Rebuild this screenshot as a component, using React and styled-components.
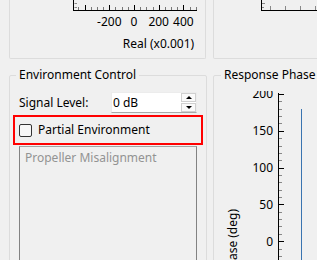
import React from "react";
import styled, { createGlobalStyle } from "styled-components";

const GlobalStyle = createGlobalStyle`
  html, body {
    margin: 0;
    padding: 0;
    background: #f0f0f0;
    overflow: hidden;
  }
  body {
    font-family: "Noto Sans", "Liberation Sans", sans-serif;
    font-size: 12px;
    color: #000;
  }
`;

const Page = styled.div`
  width: 420px;
  height: 260px;
  padding-left: 9px;
  box-sizing: border-box;
`;

const TopRow = styled.div`
  display: grid;
  grid-template-columns: 197px 1fr;
  column-gap: 7px;
`;

const OpenGroup = styled.div`
  height: 58px;
  border: 1px solid #dcdcdc;
  border-top: none;
  border-radius: 0 0 2px 2px;
  overflow: hidden;
`;

const BottomRow = styled.div`
  display: grid;
  grid-template-columns: 198px 1fr;
  column-gap: 6px;
  margin-top: 8px;
`;

const Group = styled.fieldset`
  margin: 0;
  padding: 0 ${(p) => p.$padX}px;
  min-width: 0;
  height: 240px;
  border: 1px solid #dcdcdc;
  border-radius: 2px;
`;

const GroupTitle = styled.legend`
  padding: 0 3px;
  margin-left: ${(p) => p.$shift || 0}px;
  font-size: 12px;
  line-height: 16px;
  white-space: nowrap;
`;

const FieldRow = styled.div`
  display: grid;
  grid-template-columns: 92px 86px;
  align-items: center;
  margin-top: 9px;
`;

const FieldLabel = styled.span`
  line-height: 16px;
`;

const SpinBox = styled.div`
  display: flex;
  align-items: center;
  height: 21px;
  box-sizing: border-box;
  background: #fff;
  border: 1px solid #ececec;
  border-bottom-color: #a9a9a9;
`;

const SpinValue = styled.span`
  flex: 1;
  padding-left: 1px;
  line-height: 16px;
`;

const SpinButtons = styled.div`
  display: flex;
  flex-direction: column;
  gap: 1px;
  margin-right: 0;
`;

const SpinButton = styled.div`
  width: 15px;
  height: 9px;
  box-sizing: border-box;
  border: 1px solid #d0d0d0;
  background: #fafafa;
  display: flex;
  align-items: center;
  justify-content: center;

  &::after {
    content: "";
    border-left: 3px solid transparent;
    border-right: 3px solid transparent;
    ${(p) =>
      p.$down
        ? "border-top: 3px solid #000;"
        : "border-bottom: 3px solid #000;"}
  }
`;

const CheckRow = styled.label`
  display: flex;
  align-items: center;
  gap: 6px;
  width: 190px;
  height: 30px;
  box-sizing: border-box;
  margin: 2px 0 0 -6px;
  padding-left: 4px;
  border: 2px solid #ff0000;
  line-height: 16px;
`;

const CheckBox = styled.span`
  width: 13px;
  height: 13px;
  box-sizing: border-box;
  border: 1px solid #333;
  border-radius: 2px;
  background: #f7f7f7;
`;

const ListBox = styled.div`
  width: 178px;
  height: 140px;
  box-sizing: border-box;
  margin-top: 1px;
  border: 1px solid #828282;
  border-top-color: #a3a3a3;
`;

const ListItem = styled.div`
  padding: 3px 5px;
  line-height: 16px;
  color: #939393;
`;

const PlotSvg = styled.svg`
  display: block;
  margin-top: ${(p) => p.$top || 0}px;
  font-family: "Noto Sans", "Liberation Sans", sans-serif;
  font-size: 12px;
`;

const realX = (v) => 134 + v * 0.1235;

const RealPlot = () => {
  const minors = [];
  for (let v = -450; v <= 500; v += 50) minors.push(v);
  return (
    <PlotSvg width="195" height="58">
      <g transform="translate(-10,0)">
        <line x1="74.5" y1="3.5" x2="77" y2="3.5" stroke="#888" />
        <line x1="74.5" y1="7.5" x2="77" y2="7.5" stroke="#888" />
        {minors.map((v) => {
          const major = v % 200 === 0;
          const x = Math.round(realX(v)) + 0.5;
          return (
            <line
              key={v}
              x1={x}
              x2={x}
              y1={major ? 5 : 7}
              y2={10}
              stroke={major ? "#000" : "#777"}
            />
          );
        })}
        <line x1="73.5" y1="0" x2="73.5" y2="11" stroke="#000" />
        <line x1="73" y1="10.5" x2="197" y2="10.5" stroke="#000" />
        {[-200, 0, 200, 400].map((v) => (
          <text key={v} x={realX(v)} y="25.5" textAnchor="middle">
            {v}
          </text>
        ))}
        <text x="158.5" y="47.5" textAnchor="middle">
          Real (x0.001)
        </text>
      </g>
    </PlotSvg>
  );
};

const CornerPlot = () => (
  <PlotSvg width="110" height="58">
    <g transform="translate(-214,0)">
      <line x1="262" y1="3.5" x2="265" y2="3.5" stroke="#888" />
      <line x1="262" y1="7.5" x2="264" y2="7.5" stroke="#888" />
      {[270.5, 285.5, 300.5, 315.5].map((x) => (
        <line key={x} x1={x} x2={x} y1="6" y2="10" stroke="#888" />
      ))}
      <line x1="261.5" y1="0" x2="261.5" y2="11" stroke="#000" />
      <line x1="261" y1="10.5" x2="330" y2="10.5" stroke="#000" />
    </g>
  </PlotSvg>
);

const phaseY = (v) => 241.2 - v * 0.736;

const PhasePlot = () => {
  const ticks = [];
  for (let v = -20; v <= 200; v += 10) ticks.push(v);
  return (
    <PlotSvg width="110" height="180" $top={8}>
      <g transform="translate(-221,-91)">
        {ticks.map((v) => {
          const major = v % 50 === 0;
          const y = Math.round(phaseY(v)) + 0.5;
          return (
            <line
              key={v}
              x1="278"
              x2={major ? 284 : 282}
              y1={y}
              y2={y}
              stroke={major ? "#000" : "#888"}
            />
          );
        })}
        <line x1="278.5" y1="93" x2="278.5" y2="270" stroke="#000" />
        {[0, 50, 100, 150, 200].map((v) => (
          <text key={v} x="273" y={phaseY(v) + 4.3} textAnchor="end">
            {v}
          </text>
        ))}
        <text
          transform="translate(237,209) rotate(-90)"
          textAnchor="end"
        >
          Response Phase (deg)
        </text>
        <line x1="301.5" y1="109" x2="301.5" y2="270" stroke="#3a74b0" />
      </g>
    </PlotSvg>
  );
};

export default function App() {
  return (
    <>
      <GlobalStyle />
      <Page>
        <TopRow>
          <OpenGroup>
            <RealPlot />
          </OpenGroup>
          <OpenGroup>
            <CornerPlot />
          </OpenGroup>
        </TopRow>
        <BottomRow>
          <Group $padX={9}>
            <GroupTitle $shift={-3}>Environment Control</GroupTitle>
            <FieldRow>
              <FieldLabel>Signal Level:</FieldLabel>
              <SpinBox>
                <SpinValue>0 dB</SpinValue>
                <SpinButtons>
                  <SpinButton />
                  <SpinButton $down />
                </SpinButtons>
              </SpinBox>
            </FieldRow>
            <CheckRow>
              <CheckBox />
              <span>Partial Environment</span>
            </CheckRow>
            <ListBox>
              <ListItem>Propeller Misalignment</ListItem>
            </ListBox>
          </Group>
          <Group $padX={7}>
            <GroupTitle>Response Phase</GroupTitle>
            <PhasePlot />
          </Group>
        </BottomRow>
      </Page>
    </>
  );
}
